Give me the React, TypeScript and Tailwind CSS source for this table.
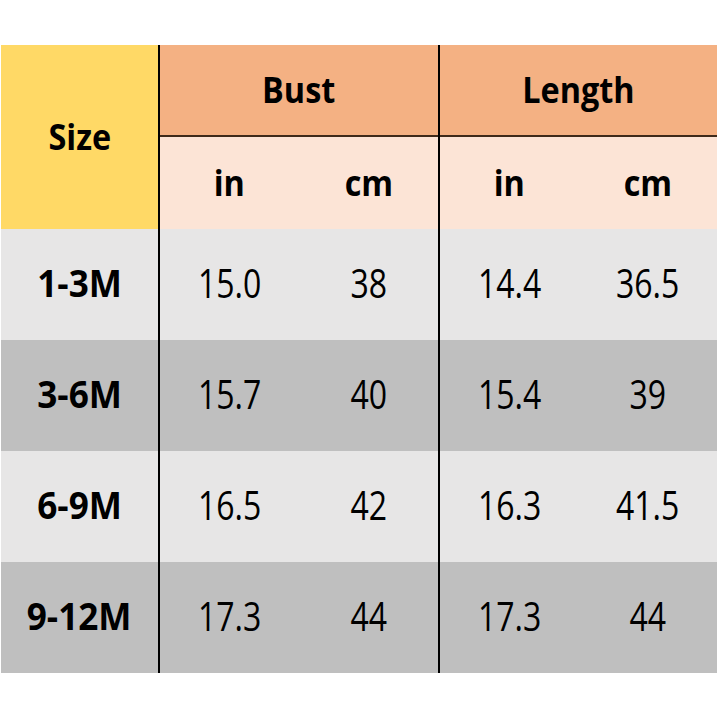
const ROWS = [
  { size: '1-3M', vals: ['15.0', '38', '14.4', '36.5'], bg: 'bg-[#e7e6e6]' },
  { size: '3-6M', vals: ['15.7', '40', '15.4', '39'], bg: 'bg-[#bfbfbf]' },
  { size: '6-9M', vals: ['16.5', '42', '16.3', '41.5'], bg: 'bg-[#e7e6e6]' },
  { size: '9-12M', vals: ['17.3', '44', '17.3', '44'], bg: 'bg-[#bfbfbf]' },
];

const head = 'text-[36px] font-bold text-black scale-x-90 inline-block';
const num = 'text-[40px] text-black scale-x-80 inline-block -mt-1';

export default function App() {
  return (
    <div className="w-[717px] h-[717px] bg-white pt-[45px] pl-px" style={{ fontFamily: '"Open Sans", "Noto Sans", sans-serif' }}>
      <div className="grid grid-cols-[159px_280px_277px] grid-rows-[184px_444px]">
        {/* Size header */}
        <div className="bg-[#ffd966] flex items-center justify-center border-r-2 border-black">
          <span className={head}>Size</span>
        </div>

        {/* Bust / Length headers */}
        {['Bust', 'Length'].map((label, i) => (
          <div key={label} className={`grid grid-rows-[92px_92px] ${i === 0 ? 'border-r-2 border-black' : ''}`}>
            <div className="bg-[#f4b183] flex items-center justify-center border-b-2 border-[#3f2a1a]">
              <span className={head}>{label}</span>
            </div>
            <div className="bg-[#fce4d6] grid grid-cols-2">
              <div className="flex items-center justify-center">
                <span className={head}>in</span>
              </div>
              <div className="flex items-center justify-center">
                <span className={head}>cm</span>
              </div>
            </div>
          </div>
        ))}

        {/* Size labels */}
        <div className="grid grid-rows-4 border-r-2 border-black">
          {ROWS.map((r) => (
            <div key={r.size} className={`${r.bg} flex items-center justify-center`}>
              <span className="text-[37px] font-bold text-black scale-x-95 inline-block -mt-1">{r.size}</span>
            </div>
          ))}
        </div>

        {/* Bust values */}
        <div className="grid grid-rows-4 border-r-2 border-black">
          {ROWS.map((r) => (
            <div key={r.size} className={`${r.bg} grid grid-cols-2`}>
              <div className="flex items-center justify-center"><span className={num}>{r.vals[0]}</span></div>
              <div className="flex items-center justify-center"><span className={num}>{r.vals[1]}</span></div>
            </div>
          ))}
        </div>

        {/* Length values */}
        <div className="grid grid-rows-4">
          {ROWS.map((r) => (
            <div key={r.size} className={`${r.bg} grid grid-cols-2`}>
              <div className="flex items-center justify-center"><span className={num}>{r.vals[2]}</span></div>
              <div className="flex items-center justify-center"><span className={num}>{r.vals[3]}</span></div>
            </div>
          ))}
        </div>
      </div>
    </div>
  );
}
